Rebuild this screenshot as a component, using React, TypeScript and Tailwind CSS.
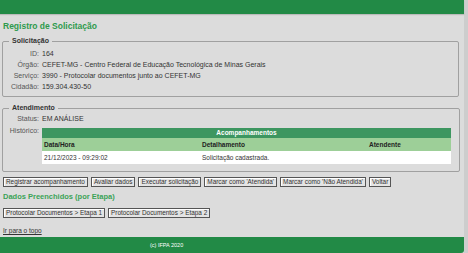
import React from 'react';

const buttons1 = [
  'Registrar acompanhamento',
  'Avaliar dados',
  'Executar solicitação',
  "Marcar como 'Atendida'",
  "Marcar como 'Não Atendida'",
  'Voltar',
];

const buttons2 = ['Protocolar Documentos > Etapa 1', 'Protocolar Documentos > Etapa 2'];

const solicitacao = [
  { label: 'ID:', value: '164' },
  { label: 'Órgão:', value: 'CEFET-MG - Centro Federal de Educação Tecnológica de Minas Gerais' },
  { label: 'Serviço:', value: '3990 - Protocolar documentos junto ao CEFET-MG' },
  { label: 'Cidadão:', value: '159.304.430-50' },
];

const Btn = ({ children }: { children: React.ReactNode }) => (
  <button className="h-[10px] px-[2px] border border-[#555] bg-[#e4e4e4] text-[6.4px] leading-[8px] text-[#333] shadow-[inset_1px_1px_0_#fff]">
    {children}
  </button>
);

export default function App() {
  return (
    <div
      className="w-[468px] h-[253px] bg-[#cdcdcd] flex overflow-hidden"
      style={{ fontFamily: '"Liberation Sans", Arial, sans-serif' }}
    >
      <div className="w-[464px] h-full bg-[#dcdcdc] flex flex-col">
        <div className="h-[14px] bg-[#228a46] shadow-[0_1px_1px_rgba(0,0,0,0.15)]" />

        <div className="px-[2px] flex flex-col">
          <h1 className="mt-[7px] ml-[1px] text-[8.5px] leading-[10px] font-bold text-[#2e9a4c]">
            Registro de Solicitação
          </h1>

          <fieldset className="mt-[6px] mr-[3px] border border-[#a0a0a0] rounded-[2px] pl-0 pb-[4px] pt-[3px]">
            <legend className="ml-[6px] px-[3px] text-[7px] leading-[8px] font-bold text-[#333]">
              Solicitação
            </legend>
            <div className="grid grid-cols-[36px_1fr] gap-x-[3px] text-[7px] leading-[11px]">
              {solicitacao.map((r) => (
                <React.Fragment key={r.label}>
                  <span className="text-right text-[#555]">{r.label}</span>
                  <span className="text-[#333]">{r.value}</span>
                </React.Fragment>
              ))}
            </div>
          </fieldset>

          <fieldset className="mt-[7px] mr-[3px] border border-[#a0a0a0] rounded-[2px] pl-0 pr-[8px] pb-[7px] pt-[1px]">
            <legend className="ml-[6px] px-[3px] text-[7px] leading-[8px] font-bold text-[#333]">
              Atendimento
            </legend>
            <div className="grid grid-cols-[36px_1fr] gap-x-[3px] text-[7px] leading-[11px]">
              <span className="text-right text-[#555]">Status:</span>
              <span className="text-[#333]">EM ANÁLISE</span>
              <span className="text-right text-[#555] mt-[1px]">Histórico:</span>
              <table className="w-[409px] mt-[4px] border-collapse text-[6.5px]">
                <thead>
                  <tr className="bg-[#3d9660]">
                    <th colSpan={3} className="h-[10px] text-center font-bold text-white leading-[10px]">
                      Acompanhamentos
                    </th>
                  </tr>
                  <tr className="bg-[#9dcf98]">
                    <th className="h-[13px] w-[158px] text-left pl-[2px] font-bold text-[#222] leading-[13px]">Data/Hora</th>
                    <th className="h-[13px] w-[167px] text-left pl-[2px] font-bold text-[#222] leading-[13px]">Detalhamento</th>
                    <th className="h-[13px] text-left pl-[2px] font-bold text-[#222] leading-[13px]">Atendente</th>
                  </tr>
                </thead>
                <tbody>
                  <tr className="bg-white text-[#333]">
                    <td className="h-[13px] pl-[2px] leading-[13px]">21/12/2023 - 09:29:02</td>
                    <td className="h-[13px] pl-[2px] leading-[13px]">Solicitação cadastrada.</td>
                    <td className="h-[13px] pl-[2px] leading-[13px]"></td>
                  </tr>
                </tbody>
              </table>
            </div>
          </fieldset>

          <div className="mt-[5px] ml-[1px] flex gap-[3px]">
            {buttons1.map((b) => (
              <Btn key={b}>{b}</Btn>
            ))}
          </div>

          <div className="mt-[5px] ml-[1px] text-[7.5px] leading-[9px] font-bold text-[#3aa357]">
            Dados Preenchidos (por Etapa)
          </div>

          <div className="mt-[7px] ml-[1px] flex gap-[3px]">
            {buttons2.map((b) => (
              <Btn key={b}>{b}</Btn>
            ))}
          </div>

          <a href="#" className="mt-[9px] ml-[1px] text-[6.5px] leading-[8px] text-[#333] underline">
            Ir para o topo
          </a>
        </div>

        <div className="mt-auto h-[16px] bg-[#228a46] rounded-br-[3px] flex items-center">
          <span className="ml-[150px] text-[5.5px] text-white">(c) IFPA 2020</span>
        </div>
      </div>
    </div>
  );
}
